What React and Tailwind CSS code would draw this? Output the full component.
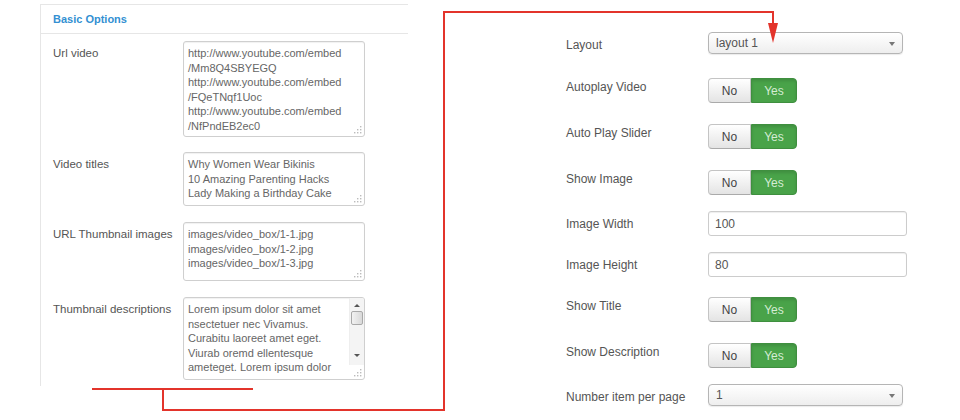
import React from "react";

const font = { fontFamily: '"Liberation Sans", Arial, sans-serif' };

function Grip() {
  return (
    <svg className="absolute right-[2px] bottom-[2px]" width="9" height="9" viewBox="0 0 9 9">
      <rect x="7" y="1" width="1.4" height="1.4" fill="#bbb" />
      <rect x="4" y="4" width="1.4" height="1.4" fill="#bbb" />
      <rect x="7" y="4" width="1.4" height="1.4" fill="#bbb" />
      <rect x="1" y="7" width="1.4" height="1.4" fill="#bbb" />
      <rect x="4" y="7" width="1.4" height="1.4" fill="#bbb" />
      <rect x="7" y="7" width="1.4" height="1.4" fill="#bbb" />
    </svg>
  );
}

function Area({ lines, className, scroll }) {
  return (
    <div
      className={`relative w-[182px] border border-[#cfcfcf] rounded-[3px] bg-white shadow-[inset_0_1px_1px_rgba(0,0,0,0.06)] overflow-hidden ${className}`}
    >
      <div className="px-[4px] pt-[4px] text-[11px] leading-[14.6px] text-[#666] whitespace-nowrap">
        {lines.map((l, i) => (
          <div key={i}>{l}</div>
        ))}
      </div>
      {scroll ? (
        <div className="absolute right-0 top-0 bottom-[14px] w-[15px] bg-[#f4f4f4] border-l border-[#eee]">
          <div className="flex justify-center pt-[6px]">
            <div className="w-0 h-0 border-l-[3px] border-r-[3px] border-b-[3px] border-l-transparent border-r-transparent border-b-[#555]" />
          </div>
          <div className="mx-[1px] mt-[4px] h-[14px] rounded-[2px] border border-[#a9a9a9] bg-gradient-to-r from-[#f2f2f2] to-[#d9d9d9]" />
          <div className="flex justify-center mt-[29px]">
            <div className="w-0 h-0 border-l-[3px] border-r-[3px] border-t-[3px] border-l-transparent border-r-transparent border-t-[#555]" />
          </div>
        </div>
      ) : null}
      <Grip />
    </div>
  );
}

function LeftRow({ label, children, mt }) {
  return (
    <div className={`flex ${mt}`}>
      <div className="w-[130px] pt-[4px] text-[11.5px] leading-[16px] text-[#555]">{label}</div>
      {children}
    </div>
  );
}

function Toggle() {
  return (
    <div className="flex h-[25px] text-[12px]">
      <div className="w-[43px] flex items-center justify-center border border-[#c4c4c4] border-b-[#aaa] rounded-l-[4px] bg-gradient-to-b from-[#ffffff] to-[#e4e4e4] text-[#444]">
        No
      </div>
      <div className="w-[46px] flex items-center justify-center border border-[#3f8f3f] rounded-r-[4px] bg-[#49a349] text-[#d4ecd4] shadow-[inset_0_2px_3px_rgba(0,0,0,0.12)]">
        Yes
      </div>
    </div>
  );
}

function Select({ value }) {
  return (
    <div className="relative w-[195px] h-[22px] flex items-center pl-[7px] border border-[#b5b5b5] rounded-[4px] bg-gradient-to-b from-[#ffffff] to-[#eeeeee] shadow-[0_1px_1px_rgba(0,0,0,0.08)] text-[12px] text-[#555]">
      {value}
      <div className="absolute right-[7px] top-[9px] w-0 h-0 border-l-[3.5px] border-r-[3.5px] border-t-[4px] border-l-transparent border-r-transparent border-t-[#777]" />
    </div>
  );
}

function Input({ value }) {
  return (
    <div className="w-[199px] h-[25px] flex items-center pl-[6px] border border-[#cccccc] rounded-[3px] bg-white shadow-[inset_0_1px_1px_rgba(0,0,0,0.07)] text-[12px] text-[#555]">
      {value}
    </div>
  );
}

const rows = [
  { label: "Layout", kind: "select", value: "layout 1", mt: "mt-[32px]" },
  { label: "Autoplay Video", kind: "toggle", mt: "mt-[24px]" },
  { label: "Auto Play Slider", kind: "toggle", mt: "mt-[21px]" },
  { label: "Show Image", kind: "toggle", mt: "mt-[21px]" },
  { label: "Image Width", kind: "input", value: "100", mt: "mt-[16px]" },
  { label: "Image Height", kind: "input", value: "80", mt: "mt-[16px]" },
  { label: "Show Title", kind: "toggle", mt: "mt-[20px]" },
  { label: "Show Description", kind: "toggle", mt: "mt-[21px]" },
  { label: "Number item per page", kind: "select", value: "1", mt: "mt-[16px]" },
];

const labelPad = { select: "pt-[5px]", toggle: "pt-[1px]", input: "pt-[5px]" };

export default function App() {
  return (
    <div className="relative w-[960px] h-[420px] bg-white overflow-hidden flex" style={font}>
      {/* left panel */}
      <div className="ml-[40px] mt-[4px] w-[368px] h-[382px] border-l border-t border-[#e6e6e6]">
        <div className="h-[29px] border-b border-[#e6e6e6] flex items-center pl-[12px] text-[11px] font-bold text-[#3390d2]">
          Basic Options
        </div>
        <div className="pl-[12px]">
          <LeftRow label="Url video" mt="mt-[7px]">
            <Area
              className="h-[96px]"
              lines={[
                "http://www.youtube.com/embed",
                "/Mm8Q4SBYEGQ",
                "http://www.youtube.com/embed",
                "/FQeTNqf1Uoc",
                "http://www.youtube.com/embed",
                "/NfPndEB2ec0",
              ]}
            />
          </LeftRow>
          <LeftRow label="Video titles" mt="mt-[15px]">
            <Area
              className="h-[54px]"
              lines={["Why Women Wear Bikinis", "10 Amazing Parenting Hacks", "Lady Making a Birthday Cake"]}
            />
          </LeftRow>
          <LeftRow label="URL Thumbnail images" mt="mt-[16px]">
            <Area
              className="h-[59px]"
              lines={["images/video_box/1-1.jpg", "images/video_box/1-2.jpg", "images/video_box/1-3.jpg"]}
            />
          </LeftRow>
          <LeftRow label="Thumbnail descriptions" mt="mt-[16px]">
            <Area
              className="h-[83px]"
              scroll
              lines={[
                "Lorem ipsum dolor sit amet",
                "nsectetuer nec Vivamus.",
                "Curabitu laoreet amet eget.",
                "Viurab oremd ellentesque",
                "ameteget. Lorem ipsum dolor",
              ]}
            />
          </LeftRow>
        </div>
      </div>

      {/* right form */}
      <div className="ml-[158px] flex flex-col">
        {rows.map((r) => (
          <div key={r.label} className={`flex ${r.mt}`}>
            <div className={`w-[142px] text-[12px] leading-[16px] text-[#555] ${labelPad[r.kind]}`}>{r.label}</div>
            {r.kind === "select" ? <Select value={r.value} /> : null}
            {r.kind === "toggle" ? <Toggle /> : null}
            {r.kind === "input" ? <Input value={r.value} /> : null}
          </div>
        ))}
      </div>

      {/* red connector arrow */}
      <svg className="absolute left-0 top-0 pointer-events-none" width="960" height="420" viewBox="0 0 960 420">
        <path d="M92 389 H253" stroke="#e3342b" strokeWidth="2" fill="none" />
        <path d="M163 389 V410 H444 V12 H773 V28" stroke="#e3342b" strokeWidth="2" fill="none" />
        <polygon points="768,23 778,23 773,43" fill="#e3342b" />
      </svg>
    </div>
  );
}
